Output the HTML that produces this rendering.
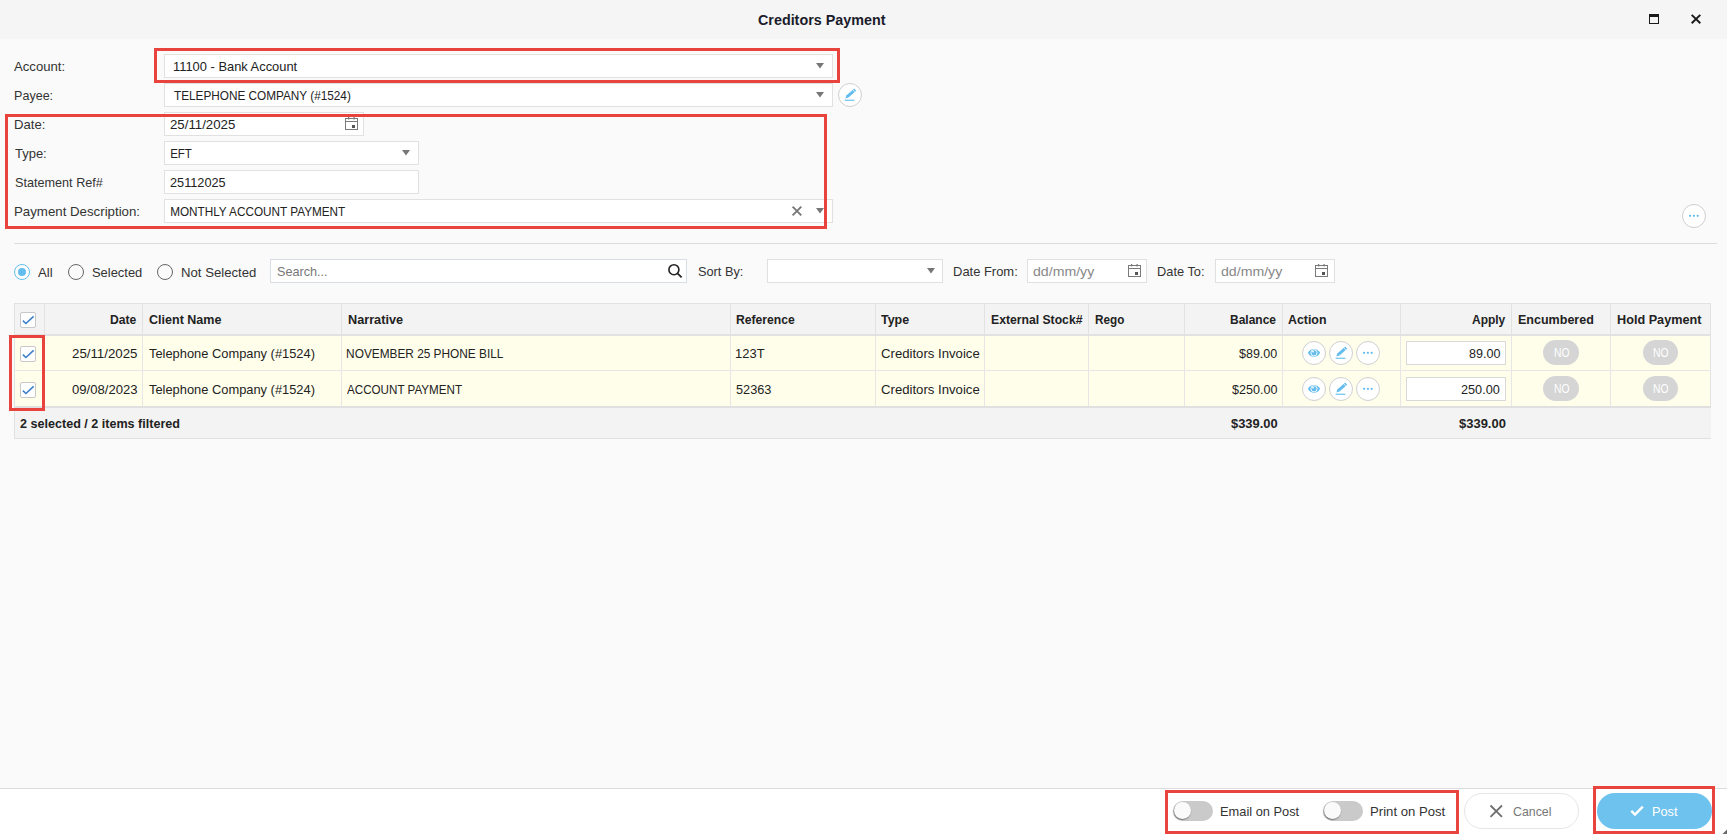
<!DOCTYPE html>
<html><head><meta charset="utf-8"><style>
html,body{margin:0;padding:0;background:#fafafa;}
body{width:1727px;height:834px;position:relative;overflow:hidden;background:#fafafa;font-family:"Liberation Sans", sans-serif;}
.t{position:absolute;white-space:nowrap;}
.a{position:absolute;box-sizing:border-box;}
</style></head><body>
<div class="a" style="left:0px;top:0px;width:1727px;height:39px;background:#f5f5f5"></div>
<div class="a" style="left:1649px;top:14px;width:10px;height:10px;border:1px solid #1a1a1a;border-top:3px solid #1a1a1a"></div>
<svg class="a" style="left:1690px;top:13px" width="12" height="12" viewBox="0 0 12 12"><path d="M1.7 1.9L10.3 10.2M10.3 1.9L1.7 10.2" stroke="#1a1a1a" stroke-width="2"/></svg>
<div class="a" style="left:164px;top:54px;width:669px;height:24px;border:1px solid #e1e1e1;background:#fff"></div>
<svg class="a" style="left:816px;top:63px" width="8" height="6" viewBox="0 0 8 6"><path d="M0 0H8L4 5.6Z" fill="#777"/></svg>
<div class="a" style="left:164px;top:83px;width:669px;height:24px;border:1px solid #e1e1e1;background:#fff"></div>
<svg class="a" style="left:816px;top:92px" width="8" height="6" viewBox="0 0 8 6"><path d="M0 0H8L4 5.6Z" fill="#777"/></svg>
<div class="a" style="left:838px;top:83px;width:24px;height:24px;border:1px solid #cfcfcf;border-radius:50%;background:#fff"></div>
<svg class="a" style="left:838px;top:83px" width="24" height="24" viewBox="0 0 24 24"><path d="M7.3 15.4 L8.6 12.2 L16.3 5.5 L18.2 7.7 L10.5 14.4 Z" fill="#62bdee"/><line x1="16.9" y1="9.2" x2="14.7" y2="6.6" stroke="#fff" stroke-width="0.7"/><rect x="6.6" y="16.7" width="9.8" height="1.1" fill="#62bdee"/></svg>
<div class="a" style="left:164px;top:112px;width:200px;height:24px;border:1px solid #e1e1e1;background:#fff"></div>
<svg class="a" style="left:345px;top:117px" width="14" height="14" viewBox="0 0 14 14"><rect x="0.5" y="1.5" width="12" height="11" fill="none" stroke="#7a7a7a" stroke-width="1"/><line x1="0.5" y1="4.5" x2="12.5" y2="4.5" stroke="#7a7a7a" stroke-width="1"/><rect x="3" y="0" width="1.2" height="2.5" fill="#7a7a7a"/><rect x="8.5" y="0" width="1.2" height="2.5" fill="#7a7a7a"/><rect x="7" y="8" width="3" height="3" fill="#555"/></svg>
<div class="a" style="left:164px;top:141px;width:255px;height:24px;border:1px solid #e1e1e1;background:#fff"></div>
<svg class="a" style="left:401.5px;top:150px" width="8" height="6" viewBox="0 0 8 6"><path d="M0 0H8L4 5.6Z" fill="#777"/></svg>
<div class="a" style="left:164px;top:170px;width:255px;height:24px;border:1px solid #e1e1e1;background:#fff"></div>
<div class="a" style="left:164px;top:199px;width:669px;height:24px;border:1px solid #e1e1e1;background:#fff"></div>
<svg class="a" style="left:816px;top:208px" width="8" height="6" viewBox="0 0 8 6"><path d="M0 0H8L4 5.6Z" fill="#777"/></svg>
<svg class="a" style="left:791px;top:205px" width="12" height="12" viewBox="0 0 12 12"><path d="M1.6 1.7L10.3 10.4M10.3 1.7L1.6 10.4" stroke="#777" stroke-width="1.9"/></svg>
<div class="a" style="left:1682px;top:204px;width:24px;height:24px;border:1px solid #cfcfcf;border-radius:50%;background:#fff"></div>
<svg class="a" style="left:1682px;top:204px" width="24" height="24" viewBox="0 0 24 24"><circle cx="8.1" cy="11.8" r="1.15" fill="#62bdee"/><circle cx="11.9" cy="11.8" r="1.15" fill="#62bdee"/><circle cx="15.7" cy="11.8" r="1.15" fill="#62bdee"/></svg>
<div class="a" style="left:14px;top:243px;width:1703px;height:1px;background:#dcdcdc"></div>
<div class="a" style="left:14px;top:264px;width:16px;height:16px;border:1px solid #62bdee;border-radius:50%;background:#fff"></div>
<div class="a" style="left:18px;top:268px;width:8px;height:8px;border-radius:50%;background:#62bdee"></div>
<div class="a" style="left:68px;top:264px;width:16px;height:16px;border:1px solid #666;border-radius:50%"></div>
<div class="a" style="left:157px;top:264px;width:16px;height:16px;border:1px solid #666;border-radius:50%"></div>
<div class="a" style="left:270px;top:259px;width:417px;height:24px;border:1px solid #d8dee3;background:#fff"></div>
<svg class="a" style="left:666px;top:262px" width="18" height="18" viewBox="0 0 18 18"><circle cx="7.9" cy="7.7" r="5" fill="none" stroke="#222" stroke-width="1.6"/><path d="M11.5 11.3L15.6 15.3" stroke="#222" stroke-width="1.8"/></svg>
<div class="a" style="left:767px;top:259px;width:176px;height:24px;border:1px solid #e0e0e0;background:#fff"></div>
<svg class="a" style="left:926.5px;top:268px" width="8" height="6" viewBox="0 0 8 6"><path d="M0 0H8L4 5.6Z" fill="#777"/></svg>
<div class="a" style="left:1027px;top:259px;width:120px;height:24px;border:1px solid #e0e0e0;background:#fff"></div>
<svg class="a" style="left:1128px;top:264px" width="14" height="14" viewBox="0 0 14 14"><rect x="0.5" y="1.5" width="12" height="11" fill="none" stroke="#7a7a7a" stroke-width="1"/><line x1="0.5" y1="4.5" x2="12.5" y2="4.5" stroke="#7a7a7a" stroke-width="1"/><rect x="3" y="0" width="1.2" height="2.5" fill="#7a7a7a"/><rect x="8.5" y="0" width="1.2" height="2.5" fill="#7a7a7a"/><rect x="7" y="8" width="3" height="3" fill="#555"/></svg>
<div class="a" style="left:1215px;top:259px;width:120px;height:24px;border:1px solid #e0e0e0;background:#fff"></div>
<svg class="a" style="left:1315px;top:264px" width="14" height="14" viewBox="0 0 14 14"><rect x="0.5" y="1.5" width="12" height="11" fill="none" stroke="#7a7a7a" stroke-width="1"/><line x1="0.5" y1="4.5" x2="12.5" y2="4.5" stroke="#7a7a7a" stroke-width="1"/><rect x="3" y="0" width="1.2" height="2.5" fill="#7a7a7a"/><rect x="8.5" y="0" width="1.2" height="2.5" fill="#7a7a7a"/><rect x="7" y="8" width="3" height="3" fill="#555"/></svg>
<div class="a" style="left:14px;top:303px;width:1697px;height:32px;background:#f3f3f3;border:1px solid #e2e2e2;border-bottom:none"></div>
<div class="a" style="left:14px;top:334px;width:1697px;height:2px;background:#e2e2e2"></div>
<div class="a" style="left:14px;top:336px;width:1697px;height:70px;background:#fffeeb;border-left:1px solid #e2e2e2;border-right:1px solid #e2e2e2"></div>
<div class="a" style="left:14px;top:370px;width:1697px;height:1px;background:#e6e6e6"></div>
<div class="a" style="left:14px;top:406px;width:1697px;height:2px;background:#e0e0e0"></div>
<div class="a" style="left:14px;top:408px;width:1697px;height:31px;background:#f3f3f3;border-left:1px solid #e2e2e2;border-bottom:1px solid #e0e0e0"></div>
<div class="a" style="left:44px;top:304px;width:1px;height:30px;background:#e2e2e2"></div>
<div class="a" style="left:44px;top:336px;width:1px;height:70px;background:#e6e6e6"></div>
<div class="a" style="left:142px;top:304px;width:1px;height:30px;background:#e2e2e2"></div>
<div class="a" style="left:142px;top:336px;width:1px;height:70px;background:#e6e6e6"></div>
<div class="a" style="left:341px;top:304px;width:1px;height:30px;background:#e2e2e2"></div>
<div class="a" style="left:341px;top:336px;width:1px;height:70px;background:#e6e6e6"></div>
<div class="a" style="left:730px;top:304px;width:1px;height:30px;background:#e2e2e2"></div>
<div class="a" style="left:730px;top:336px;width:1px;height:70px;background:#e6e6e6"></div>
<div class="a" style="left:875px;top:304px;width:1px;height:30px;background:#e2e2e2"></div>
<div class="a" style="left:875px;top:336px;width:1px;height:70px;background:#e6e6e6"></div>
<div class="a" style="left:984px;top:304px;width:1px;height:30px;background:#e2e2e2"></div>
<div class="a" style="left:984px;top:336px;width:1px;height:70px;background:#e6e6e6"></div>
<div class="a" style="left:1088px;top:304px;width:1px;height:30px;background:#e2e2e2"></div>
<div class="a" style="left:1088px;top:336px;width:1px;height:70px;background:#e6e6e6"></div>
<div class="a" style="left:1184px;top:304px;width:1px;height:30px;background:#e2e2e2"></div>
<div class="a" style="left:1184px;top:336px;width:1px;height:70px;background:#e6e6e6"></div>
<div class="a" style="left:1282px;top:304px;width:1px;height:30px;background:#e2e2e2"></div>
<div class="a" style="left:1282px;top:336px;width:1px;height:70px;background:#e6e6e6"></div>
<div class="a" style="left:1400px;top:304px;width:1px;height:30px;background:#e2e2e2"></div>
<div class="a" style="left:1400px;top:336px;width:1px;height:70px;background:#e6e6e6"></div>
<div class="a" style="left:1511px;top:304px;width:1px;height:30px;background:#e2e2e2"></div>
<div class="a" style="left:1511px;top:336px;width:1px;height:70px;background:#e6e6e6"></div>
<div class="a" style="left:1610px;top:304px;width:1px;height:30px;background:#e2e2e2"></div>
<div class="a" style="left:1610px;top:336px;width:1px;height:70px;background:#e6e6e6"></div>
<div class="a" style="left:20px;top:312px;width:16px;height:16px;border:1px solid #c8c8c8;border-radius:2px;background:#fff"></div>
<svg class="a" style="left:20px;top:312px" width="16" height="16" viewBox="0 0 16 16"><path d="M2.9 8.7 L5.9 11.5 L13.6 4.3" fill="none" stroke="#3d7ecb" stroke-width="1.6"/></svg>
<div class="a" style="left:20px;top:346px;width:16px;height:16px;border:1px solid #c8c8c8;border-radius:2px;background:#fff"></div>
<svg class="a" style="left:20px;top:346px" width="16" height="16" viewBox="0 0 16 16"><path d="M2.9 8.7 L5.9 11.5 L13.6 4.3" fill="none" stroke="#3d7ecb" stroke-width="1.6"/></svg>
<div class="a" style="left:20px;top:382px;width:16px;height:16px;border:1px solid #c8c8c8;border-radius:2px;background:#fff"></div>
<svg class="a" style="left:20px;top:382px" width="16" height="16" viewBox="0 0 16 16"><path d="M2.9 8.7 L5.9 11.5 L13.6 4.3" fill="none" stroke="#3d7ecb" stroke-width="1.6"/></svg>
<div class="a" style="left:1302px;top:341px;width:24px;height:24px;border:1px solid #cfcfcf;border-radius:50%;background:#fff"></div>
<svg class="a" style="left:1302px;top:341px" width="24" height="24" viewBox="0 0 24 24"><path d="M5.9 11.8 C8.2 6.6 15.8 6.6 18.1 11.8 C15.8 17.0 8.2 17.0 5.9 11.8Z" fill="#62bdee"/><circle cx="12" cy="11.8" r="3.1" fill="none" stroke="#fff" stroke-width="0.9"/><circle cx="11" cy="10.6" r="0.9" fill="#fff"/></svg>
<div class="a" style="left:1329px;top:341px;width:24px;height:24px;border:1px solid #cfcfcf;border-radius:50%;background:#fff"></div>
<svg class="a" style="left:1329px;top:341px" width="24" height="24" viewBox="0 0 24 24"><path d="M7.3 15.4 L8.6 12.2 L16.3 5.5 L18.2 7.7 L10.5 14.4 Z" fill="#62bdee"/><line x1="16.9" y1="9.2" x2="14.7" y2="6.6" stroke="#fff" stroke-width="0.7"/><rect x="6.6" y="16.7" width="9.8" height="1.1" fill="#62bdee"/></svg>
<div class="a" style="left:1356px;top:341px;width:24px;height:24px;border:1px solid #cfcfcf;border-radius:50%;background:#fff"></div>
<svg class="a" style="left:1356px;top:341px" width="24" height="24" viewBox="0 0 24 24"><circle cx="8.1" cy="11.8" r="1.15" fill="#62bdee"/><circle cx="11.9" cy="11.8" r="1.15" fill="#62bdee"/><circle cx="15.7" cy="11.8" r="1.15" fill="#62bdee"/></svg>
<div class="a" style="left:1406px;top:341px;width:100px;height:24px;border:1px solid #d9d9d9;background:#fff"></div>
<div class="a" style="left:1543px;top:340px;width:36px;height:25px;background:#d5d5d5;border-radius:13px"></div>
<div class="a" style="left:1643px;top:340px;width:35px;height:25px;background:#d5d5d5;border-radius:13px"></div>
<div class="a" style="left:1302px;top:377px;width:24px;height:24px;border:1px solid #cfcfcf;border-radius:50%;background:#fff"></div>
<svg class="a" style="left:1302px;top:377px" width="24" height="24" viewBox="0 0 24 24"><path d="M5.9 11.8 C8.2 6.6 15.8 6.6 18.1 11.8 C15.8 17.0 8.2 17.0 5.9 11.8Z" fill="#62bdee"/><circle cx="12" cy="11.8" r="3.1" fill="none" stroke="#fff" stroke-width="0.9"/><circle cx="11" cy="10.6" r="0.9" fill="#fff"/></svg>
<div class="a" style="left:1329px;top:377px;width:24px;height:24px;border:1px solid #cfcfcf;border-radius:50%;background:#fff"></div>
<svg class="a" style="left:1329px;top:377px" width="24" height="24" viewBox="0 0 24 24"><path d="M7.3 15.4 L8.6 12.2 L16.3 5.5 L18.2 7.7 L10.5 14.4 Z" fill="#62bdee"/><line x1="16.9" y1="9.2" x2="14.7" y2="6.6" stroke="#fff" stroke-width="0.7"/><rect x="6.6" y="16.7" width="9.8" height="1.1" fill="#62bdee"/></svg>
<div class="a" style="left:1356px;top:377px;width:24px;height:24px;border:1px solid #cfcfcf;border-radius:50%;background:#fff"></div>
<svg class="a" style="left:1356px;top:377px" width="24" height="24" viewBox="0 0 24 24"><circle cx="8.1" cy="11.8" r="1.15" fill="#62bdee"/><circle cx="11.9" cy="11.8" r="1.15" fill="#62bdee"/><circle cx="15.7" cy="11.8" r="1.15" fill="#62bdee"/></svg>
<div class="a" style="left:1406px;top:377px;width:100px;height:24px;border:1px solid #d9d9d9;background:#fff"></div>
<div class="a" style="left:1543px;top:376px;width:36px;height:25px;background:#d5d5d5;border-radius:13px"></div>
<div class="a" style="left:1643px;top:376px;width:35px;height:25px;background:#d5d5d5;border-radius:13px"></div>
<div class="a" style="left:9px;top:335px;width:36px;height:76px;border:3px solid #e8433c"></div>
<div class="a" style="left:154px;top:48px;width:686px;height:35px;border:3px solid #e8433c"></div>
<div class="a" style="left:5px;top:114px;width:822px;height:115px;border:3px solid #e8433c"></div>
<div class="a" style="left:0px;top:788px;width:1727px;height:46px;background:#fff;border-top:1px solid #dcdcdc"></div>
<div class="a" style="left:1173px;top:801px;width:40px;height:20px;background:#cacaca;border-radius:10px"></div>
<div class="a" style="left:1174.3px;top:802.4px;width:16.8px;height:16.8px;background:#fafafa;border-radius:50%;box-shadow:-0.5px 1px 1.5px rgba(0,0,0,0.45)"></div>
<div class="a" style="left:1323px;top:801px;width:40px;height:20px;background:#cacaca;border-radius:10px"></div>
<div class="a" style="left:1324.3px;top:802.4px;width:16.8px;height:16.8px;background:#fafafa;border-radius:50%;box-shadow:-0.5px 1px 1.5px rgba(0,0,0,0.45)"></div>
<div class="a" style="left:1464px;top:793px;width:115px;height:36px;border:1px solid #e6e6e6;border-radius:18px;background:#fff"></div>
<svg class="a" style="left:1489px;top:804px" width="15" height="14" viewBox="0 0 15 14"><path d="M1.5 1.5L13 12.8M13 1.5L1.5 12.8" stroke="#6f6f6f" stroke-width="1.8"/></svg>
<div class="a" style="left:1597px;top:793px;width:115px;height:36px;background:#6ec2ee;border-radius:18px"></div>
<svg class="a" style="left:1630px;top:805px" width="14" height="12" viewBox="0 0 14 12"><path d="M1.3 5.8L5 9.6L12.8 1.6" fill="none" stroke="#fff" stroke-width="2.4"/></svg>
<div class="a" style="left:1165px;top:790px;width:294px;height:44px;border:3px solid #e8433c"></div>
<div class="a" style="left:1593px;top:786px;width:122px;height:48px;border:3px solid #e8433c"></div>
<svg class="a" style="left:1720px;top:827px" width="7" height="7" viewBox="0 0 7 7"><path d="M7 2.5V7H2.5Z" fill="#6a6a6a"/></svg>
<div class="t" style="left:757.60px;top:12.30px;font-size:15px;line-height:15px;color:#1b1b2b;font-weight:bold;transform:scaleX(0.9552);transform-origin:0.00px 0;">Creditors Payment</div>
<div class="t" style="left:14.10px;top:59.57px;font-size:13.5px;line-height:13.5px;color:#333;transform:scaleX(0.9734);transform-origin:0.00px 0;">Account:</div>
<div class="t" style="left:13.70px;top:88.57px;font-size:13.5px;line-height:13.5px;color:#333;transform:scaleX(0.9285);transform-origin:1.00px 0;">Payee:</div>
<div class="t" style="left:13.70px;top:117.57px;font-size:13.5px;line-height:13.5px;color:#333;transform:scaleX(0.9700);transform-origin:1.00px 0;">Date:</div>
<div class="t" style="left:14.70px;top:146.57px;font-size:13.5px;line-height:13.5px;color:#333;transform:scaleX(0.9607);transform-origin:0.00px 0;">Type:</div>
<div class="t" style="left:14.70px;top:175.57px;font-size:13.5px;line-height:13.5px;color:#333;transform:scaleX(0.9364);transform-origin:0.00px 0;">Statement Ref#</div>
<div class="t" style="left:13.70px;top:204.57px;font-size:13.5px;line-height:13.5px;color:#333;transform:scaleX(0.9822);transform-origin:1.00px 0;">Payment Description:</div>
<div class="t" style="left:172.50px;top:59.57px;font-size:13.5px;line-height:13.5px;color:#222;transform:scaleX(0.9540);transform-origin:1.00px 0;">11100 - Bank Account</div>
<div class="t" style="left:173.50px;top:88.57px;font-size:13.5px;line-height:13.5px;color:#222;transform:scaleX(0.8718);transform-origin:0.00px 0;">TELEPHONE COMPANY (#1524)</div>
<div class="t" style="left:170.30px;top:117.57px;font-size:13.5px;line-height:13.5px;color:#222;transform:scaleX(0.9810);transform-origin:0.00px 0;">25/11/2025</div>
<div class="t" style="left:169.60px;top:146.57px;font-size:13.5px;line-height:13.5px;color:#222;transform:scaleX(0.8536);transform-origin:1.00px 0;">EFT</div>
<div class="t" style="left:170.30px;top:175.57px;font-size:13.5px;line-height:13.5px;color:#222;transform:scaleX(0.9410);transform-origin:0.00px 0;">25112025</div>
<div class="t" style="left:169.60px;top:204.57px;font-size:13.5px;line-height:13.5px;color:#222;transform:scaleX(0.8700);transform-origin:1.00px 0;">MONTHLY ACCOUNT PAYMENT</div>
<div class="t" style="left:38.10px;top:265.57px;font-size:13.5px;line-height:13.5px;color:#333;transform:scaleX(0.9731);transform-origin:0.00px 0;">All</div>
<div class="t" style="left:92.10px;top:265.57px;font-size:13.5px;line-height:13.5px;color:#333;transform:scaleX(0.9572);transform-origin:0.00px 0;">Selected</div>
<div class="t" style="left:180.60px;top:265.57px;font-size:13.5px;line-height:13.5px;color:#333;transform:scaleX(0.9738);transform-origin:1.00px 0;">Not Selected</div>
<div class="t" style="left:276.50px;top:264.57px;font-size:13.5px;line-height:13.5px;color:#777;transform:scaleX(0.9366);transform-origin:0.00px 0;">Search...</div>
<div class="t" style="left:697.80px;top:264.57px;font-size:13.5px;line-height:13.5px;color:#333;transform:scaleX(0.9458);transform-origin:0.00px 0;">Sort By:</div>
<div class="t" style="left:953.20px;top:264.57px;font-size:13.5px;line-height:13.5px;color:#333;transform:scaleX(0.9580);transform-origin:1.00px 0;">Date From:</div>
<div class="t" style="left:1033.30px;top:264.57px;font-size:13.5px;line-height:13.5px;color:#888;transform:scaleX(1.0467);transform-origin:0.00px 0;">dd/mm/yy</div>
<div class="t" style="left:1157.00px;top:264.57px;font-size:13.5px;line-height:13.5px;color:#333;transform:scaleX(0.9480);transform-origin:1.00px 0;">Date To:</div>
<div class="t" style="left:1220.90px;top:264.57px;font-size:13.5px;line-height:13.5px;color:#888;transform:scaleX(1.0467);transform-origin:0.00px 0;">dd/mm/yy</div>
<div class="t" style="left:110.30px;top:312.57px;font-size:13.5px;line-height:13.5px;color:#222;font-weight:bold;transform:scaleX(0.8974);transform-origin:0.00px 0;">Date</div>
<div class="t" style="left:148.80px;top:312.57px;font-size:13.5px;line-height:13.5px;color:#222;font-weight:bold;transform:scaleX(0.9285);transform-origin:0.00px 0;">Client Name</div>
<div class="t" style="left:347.50px;top:312.57px;font-size:13.5px;line-height:13.5px;color:#222;font-weight:bold;transform:scaleX(0.9402);transform-origin:0.00px 0;">Narrative</div>
<div class="t" style="left:736.00px;top:312.57px;font-size:13.5px;line-height:13.5px;color:#222;font-weight:bold;transform:scaleX(0.9000);transform-origin:0.00px 0;">Reference</div>
<div class="t" style="left:881.20px;top:312.57px;font-size:13.5px;line-height:13.5px;color:#222;font-weight:bold;transform:scaleX(0.9226);transform-origin:0.00px 0;">Type</div>
<div class="t" style="left:990.60px;top:312.57px;font-size:13.5px;line-height:13.5px;color:#222;font-weight:bold;transform:scaleX(0.9029);transform-origin:0.00px 0;">External Stock#</div>
<div class="t" style="left:1094.50px;top:312.57px;font-size:13.5px;line-height:13.5px;color:#222;font-weight:bold;transform:scaleX(0.8686);transform-origin:0.00px 0;">Rego</div>
<div class="t" style="left:1230.10px;top:312.57px;font-size:13.5px;line-height:13.5px;color:#222;font-weight:bold;transform:scaleX(0.8877);transform-origin:0.00px 0;">Balance</div>
<div class="t" style="left:1287.80px;top:312.57px;font-size:13.5px;line-height:13.5px;color:#222;font-weight:bold;transform:scaleX(0.9150);transform-origin:0.00px 0;">Action</div>
<div class="t" style="left:1472.00px;top:312.57px;font-size:13.5px;line-height:13.5px;color:#222;font-weight:bold;transform:scaleX(0.8870);transform-origin:0.00px 0;">Apply</div>
<div class="t" style="left:1517.60px;top:312.57px;font-size:13.5px;line-height:13.5px;color:#222;font-weight:bold;transform:scaleX(0.9273);transform-origin:0.00px 0;">Encumbered</div>
<div class="t" style="left:1616.50px;top:312.57px;font-size:13.5px;line-height:13.5px;color:#222;font-weight:bold;transform:scaleX(0.9379);transform-origin:0.00px 0;">Hold Payment</div>
<div class="t" style="left:72.00px;top:346.57px;font-size:13.5px;line-height:13.5px;color:#222;transform:scaleX(0.9840);transform-origin:0.00px 0;">25/11/2025</div>
<div class="t" style="left:148.80px;top:346.57px;font-size:13.5px;line-height:13.5px;color:#222;transform:scaleX(0.9532);transform-origin:0.00px 0;">Telephone Company (#1524)</div>
<div class="t" style="left:346.30px;top:346.57px;font-size:13.5px;line-height:13.5px;color:#222;transform:scaleX(0.8769);transform-origin:1.00px 0;">NOVEMBER 25 PHONE BILL</div>
<div class="t" style="left:734.50px;top:346.57px;font-size:13.5px;line-height:13.5px;color:#222;transform:scaleX(0.9585);transform-origin:1.00px 0;">123T</div>
<div class="t" style="left:881.10px;top:346.57px;font-size:13.5px;line-height:13.5px;color:#222;transform:scaleX(0.9744);transform-origin:0.00px 0;">Creditors Invoice</div>
<div class="t" style="left:1239.20px;top:346.57px;font-size:13.5px;line-height:13.5px;color:#222;transform:scaleX(0.9244);transform-origin:0.00px 0;">$89.00</div>
<div class="t" style="left:1468.80px;top:346.57px;font-size:13.5px;line-height:13.5px;color:#222;transform:scaleX(0.9286);transform-origin:0.00px 0;">89.00</div>
<div class="t" style="left:72.00px;top:382.57px;font-size:13.5px;line-height:13.5px;color:#222;transform:scaleX(0.9693);transform-origin:0.00px 0;">09/08/2023</div>
<div class="t" style="left:148.80px;top:382.57px;font-size:13.5px;line-height:13.5px;color:#222;transform:scaleX(0.9532);transform-origin:0.00px 0;">Telephone Company (#1524)</div>
<div class="t" style="left:347.30px;top:382.57px;font-size:13.5px;line-height:13.5px;color:#222;transform:scaleX(0.8614);transform-origin:0.00px 0;">ACCOUNT PAYMENT</div>
<div class="t" style="left:735.50px;top:382.57px;font-size:13.5px;line-height:13.5px;color:#222;transform:scaleX(0.9424);transform-origin:0.00px 0;">52363</div>
<div class="t" style="left:881.10px;top:382.57px;font-size:13.5px;line-height:13.5px;color:#222;transform:scaleX(0.9744);transform-origin:0.00px 0;">Creditors Invoice</div>
<div class="t" style="left:1232.00px;top:382.57px;font-size:13.5px;line-height:13.5px;color:#222;transform:scaleX(0.9298);transform-origin:0.00px 0;">$250.00</div>
<div class="t" style="left:1461.40px;top:382.57px;font-size:13.5px;line-height:13.5px;color:#222;transform:scaleX(0.9391);transform-origin:0.00px 0;">250.00</div>
<div class="t" style="left:1553.80px;top:347.14px;font-size:12px;line-height:12px;color:#fff;transform:scaleX(0.8604);transform-origin:0.00px 0;">NO</div>
<div class="t" style="left:1653.10px;top:347.14px;font-size:12px;line-height:12px;color:#fff;transform:scaleX(0.8604);transform-origin:0.00px 0;">NO</div>
<div class="t" style="left:1553.80px;top:383.24px;font-size:12px;line-height:12px;color:#fff;transform:scaleX(0.8604);transform-origin:0.00px 0;">NO</div>
<div class="t" style="left:1653.10px;top:383.24px;font-size:12px;line-height:12px;color:#fff;transform:scaleX(0.8604);transform-origin:0.00px 0;">NO</div>
<div class="t" style="left:20.10px;top:416.57px;font-size:13.5px;line-height:13.5px;color:#222;font-weight:bold;transform:scaleX(0.9313);transform-origin:0.00px 0;">2 selected / 2 items filtered</div>
<div class="t" style="left:1230.70px;top:416.57px;font-size:13.5px;line-height:13.5px;color:#222;font-weight:bold;transform:scaleX(0.9567);transform-origin:0.00px 0;">$339.00</div>
<div class="t" style="left:1459.30px;top:416.57px;font-size:13.5px;line-height:13.5px;color:#222;font-weight:bold;transform:scaleX(0.9608);transform-origin:0.00px 0;">$339.00</div>
<div class="t" style="left:1220.30px;top:804.57px;font-size:13.5px;line-height:13.5px;color:#333;transform:scaleX(0.9499);transform-origin:1.00px 0;">Email on Post</div>
<div class="t" style="left:1370.40px;top:804.57px;font-size:13.5px;line-height:13.5px;color:#333;transform:scaleX(0.9734);transform-origin:1.00px 0;">Print on Post</div>
<div class="t" style="left:1513.40px;top:804.57px;font-size:13.5px;line-height:13.5px;color:#777;transform:scaleX(0.9138);transform-origin:0.00px 0;">Cancel</div>
<div class="t" style="left:1652.40px;top:804.57px;font-size:13.5px;line-height:13.5px;color:#fff;transform:scaleX(0.9405);transform-origin:1.00px 0;">Post</div>
</body></html>
